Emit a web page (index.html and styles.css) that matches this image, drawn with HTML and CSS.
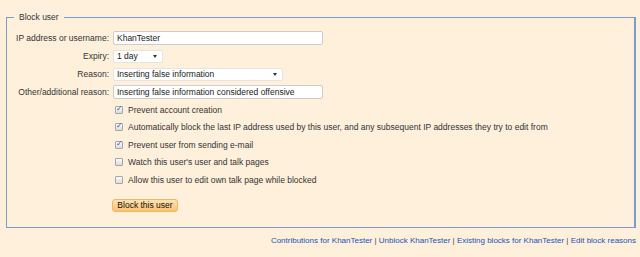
FILE: index.html
```html
<!DOCTYPE html>
<html>
  <head>
    <meta charset="utf-8">
    <title>Block user</title>
    <link rel="stylesheet" href="styles.css">
  </head>
  <body>
    <form class="blockForm">
      <fieldset class="blockBox">
        <legend>Block user</legend>
        <div class="formGrid">
          <label class="fieldLabel" for="target">IP address or username:</label>
          <div class="fieldCell"><input id="target" class="textField" type="text" value="KhanTester"></div>

          <label class="fieldLabel" for="expiry">Expiry:</label>
          <div class="fieldCell"><span class="selectBox expirySelect">1 day<span class="arrow"></span></span></div>

          <label class="fieldLabel" for="reason">Reason:</label>
          <div class="fieldCell"><span class="selectBox reasonSelect">Inserting false information<span class="arrow"></span></span></div>

          <label class="fieldLabel" for="other">Other/additional reason:</label>
          <div class="fieldCell"><input id="other" class="textField" type="text" value="Inserting false information considered offensive"></div>
        </div>

        <div class="options">
          <label class="option"><input type="checkbox" checked> Prevent account creation</label>
          <label class="option"><input type="checkbox" checked> Automatically block the last IP address used by this user, and any subsequent IP addresses they try to edit from</label>
          <label class="option"><input type="checkbox" checked> Prevent user from sending e-mail</label>
          <label class="option"><input type="checkbox"> Watch this user's user and talk pages</label>
          <label class="option"><input type="checkbox"> Allow this user to edit own talk page while blocked</label>
        </div>

        <div class="submitRow">
          <button class="blockButton" type="button">Block this user</button>
        </div>
      </fieldset>
    </form>

    <div class="footerLinks">
      <a href="#">Contributions for KhanTester</a> |
      <a href="#">Unblock KhanTester</a> |
      <a href="#">Existing blocks for KhanTester</a> |
      <a href="#">Edit block reasons</a>
    </div>
  </body>
</html>
```

FILE: styles.css
```css
html, body {
  margin: 0;
  padding: 0;
}

body {
  background-color: #fff0dc;
  color: #333;
  font-family: "Liberation Sans", Arial, sans-serif;
  font-size: 8.5px;
  width: 640px;
  height: 257px;
  overflow: hidden;
}

.blockForm {
  padding: 12px 4px 0 6px;
}

.blockBox {
  margin: 0;
  border: 1px solid #7a9bd0;
  border-right-width: 2px;
  padding: 9px 0 15px 0;
}

.blockBox legend {
  margin-left: 7px;
  padding: 0 5px;
  line-height: 10px;
}

.formGrid {
  display: grid;
  grid-template-columns: 102px 1fr;
  grid-auto-rows: 14px;
  column-gap: 4px;
  row-gap: 4px;
  align-items: center;
}

.fieldLabel {
  text-align: right;
}

.textField {
  width: 210px;
  height: 14px;
  box-sizing: border-box;
  border: 1px solid #ccc;
  border-radius: 2px;
  background: #fff;
  font-family: inherit;
  font-size: 8.5px;
  color: #222;
  padding: 0 3px;
  display: block;
}

.selectBox {
  position: relative;
  display: block;
  height: 13px;
  line-height: 11px;
  box-sizing: border-box;
  background: #fff;
  border-radius: 2px;
  border: 1px solid #e4e4e4;
  padding-left: 3px;
  color: #222;
}

.expirySelect {
  width: 50px;
}

.reasonSelect {
  width: 170px;
}

.arrow {
  position: absolute;
  right: 5px;
  top: 4px;
  width: 0;
  height: 0;
  border-left: 2.5px solid transparent;
  border-right: 2.5px solid transparent;
  border-top: 3px solid #333;
}

.options {
  padding-left: 107px;
  margin-top: 2px;
}

.option {
  display: flex;
  align-items: center;
  height: 17.5px;
}

.option input {
  appearance: none;
  -webkit-appearance: none;
  width: 8px;
  height: 8px;
  margin: 0 5px 0 1px;
  border: 1px solid #a5a5a5;
  border-radius: 1px;
  background: linear-gradient(#fbfbfb, #dcdcdc);
  position: relative;
}

.option input:checked::after {
  content: "\2713";
  position: absolute;
  left: 0px;
  top: -3px;
  font-size: 8px;
  color: #2f56b0;
}

.submitRow {
  padding-left: 105px;
  margin-top: 10px;
}

.blockButton {
  display: block;
  font-family: inherit;
  font-size: 8.5px;
  color: #111;
  width: 66px;
  height: 13px;
  padding: 0;
  border: 1px solid #e8b770;
  border-radius: 3px;
  background: linear-gradient(#fde3b4, #fbc26e);
}

.footerLinks {
  text-align: right;
  padding-right: 4px;
  margin-top: 8px;
  color: #444;
  font-size: 8px;
  line-height: 10px;
}

.footerLinks a {
  color: #2450b4;
  text-decoration: none;
}
```
